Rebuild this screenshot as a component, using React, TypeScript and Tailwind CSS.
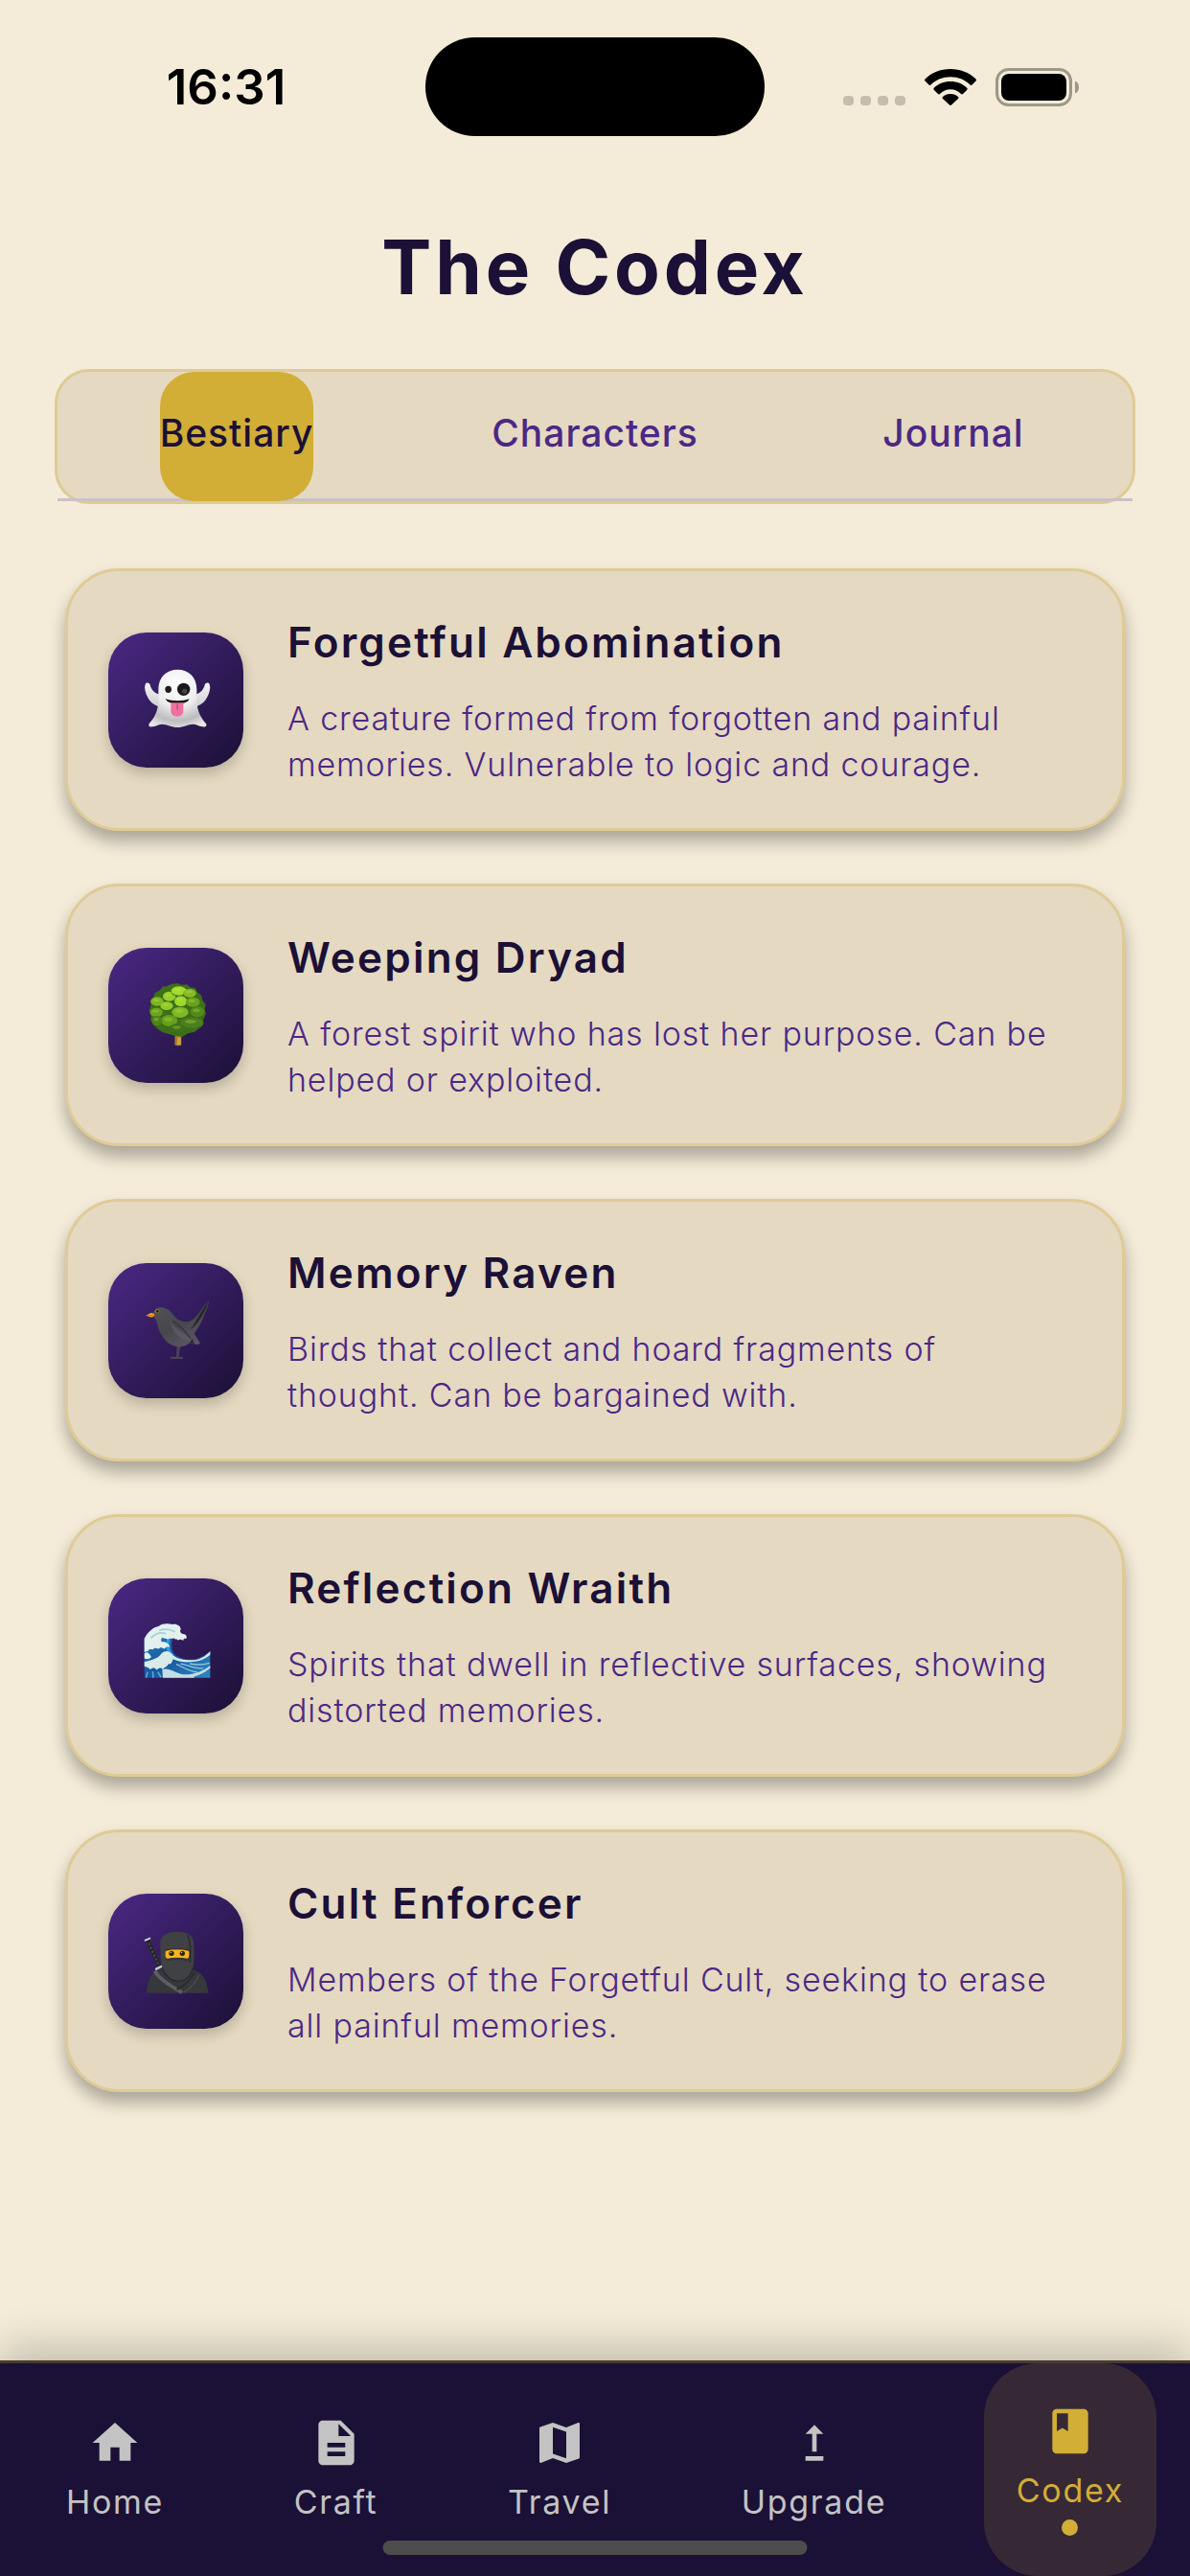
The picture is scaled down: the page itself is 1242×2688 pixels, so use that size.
import { useState } from 'react';
import type { ComponentType } from 'react';
import { MdBook, MdDescription, MdHome, MdMap, MdUpgrade } from 'react-icons/md';
import clsx from 'clsx';

function GhostArt() {
  return (
    <svg viewBox="145 149 210 210" className="size-[70px] overflow-visible" aria-hidden="true">
      <defs>
        <radialGradient id="ghostBody" cx="0.5" cy="0.25" r="0.8">
          <stop offset="0" stopColor="#ffffff" />
          <stop offset="0.5" stopColor="#ececec" />
          <stop offset="0.8" stopColor="#bdbdc0" />
          <stop offset="1" stopColor="#e6e6e6" />
        </radialGradient>
        <linearGradient id="ghostArm" x1="0" y1="0" x2="0" y2="1">
          <stop offset="0" stopColor="#f4f4f4" />
          <stop offset="1" stopColor="#cfcfd2" />
        </linearGradient>
      </defs>
      <path d="M153 206 C156 199 166 201 168 208 C172 224 182 234 200 238 V276 C174 274 154 248 151 216 Z" fill="url(#ghostArm)" />
      <path d="M354 206 C351 199 341 201 339 208 C335 224 325 234 307 238 V276 C333 274 353 248 356 216 Z" fill="url(#ghostArm)" />
      <path
        d="M194 222 C194 184 219 160 254 160 C289 160 314 184 314 222 V258 C315 290 328 314 343 329 C347 336 341 341 332 339 C320 337 312 331 302 331 C288 331 272 341 254 341 C236 341 220 331 206 331 C196 331 188 337 176 339 C166 341 161 336 165 329 C181 313 193 290 194 258 Z"
        fill="url(#ghostBody)"
      />
      <ellipse cx="225" cy="222" rx="10" ry="11" fill="#1c1c1c" />
      <circle cx="273" cy="222" r="20" fill="#191919" />
      <circle cx="276" cy="228" r="8" fill="#444444" />
      <path d="M216 252 C236 260 272 260 291 252 C286 264 270 267 254 267 C238 267 221 264 216 252 Z" fill="#101010" />
      <path d="M233 264 H272 V288 C272 301 264 307 253 307 C241 307 233 301 233 288 Z" fill="#f0709f" />
      <path d="M253 268 V285" stroke="#c84a7b" strokeWidth="4" strokeLinecap="round" />
    </svg>
  );
}

function TreeArt() {
  const clumps = [
    [190, 224, 20, 14, '#7fb524'],
    [228, 208, 20, 15, '#98cf2c'],
    [258, 191, 24, 14, '#a3da30'],
    [292, 198, 20, 13, '#86bb26'],
    [264, 223, 20, 16, '#9fd72c'],
    [302, 226, 22, 15, '#69a11f'],
    [220, 238, 20, 13, '#93c92a'],
    [188, 258, 20, 14, '#6ea321'],
    [262, 258, 26, 17, '#7fb826'],
    [316, 256, 22, 17, '#528a1b'],
    [228, 284, 26, 18, '#66a01e'],
    [190, 284, 16, 16, '#4e8519'],
    [298, 291, 36, 17, '#4b7f1c'],
    [254, 309, 26, 15, '#3f7117'],
  ] as const;

  return (
    <svg viewBox="145 161 210 210" className="size-[70px] overflow-visible" aria-hidden="true">
      <path d="M246 320 H266 V360 Q256 366 245 360 Z" fill="#a9792f" />
      <path d="M254 336 H264 V360 H252 Z" fill="#cf9f4c" />
      <path
        d="M254 167 L268 172 L283 171 L293 179 L309 183 L317 196 L329 205 L332 220 L342 234 L339 248 L343 264 L335 278 L335 296 L322 308 L306 320 L286 324 L268 335 L246 331 L226 326 L206 320 L190 309 L180 298 L170 284 L171 268 L165 252 L171 236 L168 222 L179 210 L184 196 L197 190 L207 178 L222 176 L236 169 Z"
        fill="#3d7018"
      />
      {clumps.map(([cx, cy, rx, ry, fill]) => (
        <g key={`${cx}-${cy}`}>
          <ellipse cx={cx} cy={cy + 3} rx={rx} ry={ry} fill="#3a6b15" />
          <ellipse cx={cx} cy={cy} rx={rx} ry={ry} fill={fill} />
          <ellipse cx={cx - 3} cy={cy - 4} rx={rx / 2} ry={ry / 3} fill="#c0ec50" opacity="0.3" />
        </g>
      ))}
    </svg>
  );
}

function RavenArt() {
  return (
    <svg viewBox="145 158 210 210" className="size-[70px] overflow-visible" aria-hidden="true">
      <defs>
        <linearGradient id="ravenBody" x1="0" y1="0" x2="0.6" y2="1">
          <stop offset="0" stopColor="#55535a" />
          <stop offset="0.6" stopColor="#48464d" />
          <stop offset="1" stopColor="#5a5662" />
        </linearGradient>
      </defs>
      <path d="M252 308 L250 346 H232 Q228 350 232 353 H270 Q274 350 268 346 H258 L263 308 Z" fill="#4b4258" />
      <path d="M350 172 C354 178 346 196 336 220 C326 246 314 262 306 274 L324 302 Q324 308 314 308 L292 303 C280 312 266 318 250 314 C224 308 206 288 196 262 C190 244 190 232 180 222 C174 206 184 192 200 192 C222 192 234 206 246 222 C256 234 272 238 288 236 C308 232 326 200 350 172 Z" fill="url(#ravenBody)" />
      <path d="M349 176 C338 190 322 216 312 234 C304 250 296 258 292 262 C310 252 326 228 338 204 C344 192 350 182 349 176 Z" fill="#26242b" />
      <path d="M228 236 C246 256 270 272 318 304 C292 302 262 290 244 270 Z" fill="#5f5d65" opacity="0.7" />
      <path d="M240 234 C262 250 282 268 294 290" stroke="#35333a" strokeWidth="4" fill="none" />
      <path d="M292 303 L300 290 L306 304 Z" fill="#26242b" />
      <path d="M155 217 L170 209 Q181 209 182 216 Q180 224 168 222 Z" fill="#f6a313" />
      <path d="M155 217 L182 216" stroke="#b86f0b" strokeWidth="2" />
      <circle cx="191" cy="204" r="6" fill="#a08a3a" />
      <circle cx="191" cy="204" r="4" fill="#141414" />
    </svg>
  );
}

function WaveArt() {
  return (
    <svg viewBox="145 154 210 210" className="size-[70px] overflow-visible" aria-hidden="true">
      <defs>
        <linearGradient id="waveSea" x1="0" y1="0" x2="1" y2="1">
          <stop offset="0" stopColor="#2f86c6" />
          <stop offset="0.5" stopColor="#1558a0" />
          <stop offset="1" stopColor="#2f86c0" />
        </linearGradient>
      </defs>
      <path d="M150 236 C170 208 196 194 226 198 L244 222 C232 246 232 270 246 288 C266 302 290 306 312 302 C332 296 346 286 356 277 V360 H150 Z" fill="url(#waveSea)" />
      <path d="M232 232 C224 254 228 276 244 290 L226 284 C214 268 216 250 222 234 Z" fill="#2a9be0" />
      <path
        d="M150 238 C160 216 178 202 196 198 C208 188 226 190 238 193 C250 190 264 198 264 208 C260 214 262 220 270 223 C280 222 286 232 280 239 C276 236 272 238 272 244 C266 240 260 238 256 243 C252 238 246 242 242 236 C236 240 228 234 224 240 C218 236 212 238 208 234 C202 236 200 244 206 248 C216 246 228 254 230 264 C222 260 216 264 212 270 C206 264 198 264 194 270 C188 266 180 266 176 272 C170 268 164 270 162 276 L150 280 Z"
        fill="#e3f1ee"
      />
      <path d="M170 236 C184 222 200 216 218 222 M196 212 C212 206 230 208 246 216" stroke="#a9cfd2" strokeWidth="5" fill="none" />
      <path d="M150 284 L158 280 L166 286 L172 296 L162 302 L150 300 Z" fill="#e3f1ee" />
      <path
        d="M150 310 C172 306 194 300 204 284 C216 272 230 276 240 290 C258 306 290 306 312 304 C332 300 346 288 356 277 V288 C338 304 318 308 300 310 C276 313 256 310 240 302 C236 314 232 320 226 316 C220 328 212 326 208 334 C200 326 194 330 188 336 C182 326 174 330 168 334 C162 326 156 326 150 324 Z"
        fill="#d9ebe9"
      />
      <path d="M206 334 C230 326 250 350 280 350 C310 350 338 336 356 322 V330 C336 346 320 352 306 356 V360 H208 Z" fill="#c3dfe3" />
      <path d="M250 318 C270 326 292 342 316 342 M264 316 C290 322 312 334 334 330 M292 316 C312 320 330 322 354 314" stroke="#8fc6dd" strokeWidth="4" fill="none" />
      <path d="M160 342 L156 360 M176 340 L178 360 M192 342 L202 358" stroke="#5fa7d2" strokeWidth="5" fill="none" />
    </svg>
  );
}

function NinjaArt() {
  return (
    <svg viewBox="145 151 210 210" className="size-[70px] overflow-visible" aria-hidden="true">
      <path d="M160 191 L198 274" stroke="#27262b" strokeWidth="14" strokeLinecap="round" />
      <path d="M164 202 L194 268" stroke="#59585e" strokeWidth="5" strokeDasharray="5 8" />
      <path d="M153 192 L167 186" stroke="#cfd0d6" strokeWidth="6" strokeLinecap="round" />
      <path d="M187 282 L207 272" stroke="#c7c8ce" strokeWidth="7" strokeLinecap="round" />
      <path d="M156 357 C160 320 168 296 190 286 L216 280 H296 L320 292 C340 304 346 328 351 357 Z" fill="#36383b" />
      <path d="M200 196 C204 174 226 165 252 165 C282 165 300 174 304 196 C306 222 307 248 303 276 C296 304 276 320 256 321 C234 318 214 304 206 280 C200 250 199 222 200 196 Z" fill="#3f4144" />
      <path d="M284 176 C294 190 296 220 292 262" stroke="#2b2d2f" strokeWidth="5" fill="none" />
      <rect x="216" y="219" width="74" height="32" rx="12" fill="#f5b51c" />
      <path d="M216 223 Q252 215 290 223" stroke="#2a2b2d" strokeWidth="4" fill="none" />
      <circle cx="235" cy="233" r="8" fill="#33230c" />
      <circle cx="269" cy="233" r="8" fill="#33230c" />
      <circle cx="233" cy="230" r="2" fill="#ffffff" />
      <circle cx="267" cy="230" r="2" fill="#ffffff" />
      <path d="M218 250 Q254 242 288 250 L284 256 Q254 250 222 256 Z" fill="#313336" />
      <path d="M206 280 C216 304 236 320 256 321 C278 319 296 304 303 276" stroke="#26282a" strokeWidth="4" fill="none" />
      <path d="M182 288 C200 316 232 334 268 356" stroke="#5d5f64" strokeWidth="11" fill="none" />
      <path d="M308 292 C294 318 276 334 252 346" stroke="#2a2c2f" strokeWidth="6" fill="none" />
      <path d="M322 300 C310 326 292 344 272 356" stroke="#4a4c50" strokeWidth="4" fill="none" />
    </svg>
  );
}

const tabs = ['Bestiary', 'Characters', 'Journal'];

const creatures: { name: string; description: string; art: ComponentType }[] = [
  {
    name: 'Forgetful Abomination',
    description: 'A creature formed from forgotten and painful memories. Vulnerable to logic and courage.',
    art: GhostArt,
  },
  {
    name: 'Weeping Dryad',
    description: 'A forest spirit who has lost her purpose. Can be helped or exploited.',
    art: TreeArt,
  },
  {
    name: 'Memory Raven',
    description: 'Birds that collect and hoard fragments of thought. Can be bargained with.',
    art: RavenArt,
  },
  {
    name: 'Reflection Wraith',
    description: 'Spirits that dwell in reflective surfaces, showing distorted memories.',
    art: WaveArt,
  },
  {
    name: 'Cult Enforcer',
    description: 'Members of the Forgetful Cult, seeking to erase all painful memories.',
    art: NinjaArt,
  },
];

const navItems = [
  { label: 'Home', icon: MdHome },
  { label: 'Craft', icon: MdDescription },
  { label: 'Travel', icon: MdMap },
  { label: 'Upgrade', icon: MdUpgrade },
  { label: 'Codex', icon: MdBook },
];

function StatusBar() {
  return (
    <div className="grid h-[181px] grid-cols-[1fr_354px_1fr] items-center text-black">
      <div className="pl-7 text-center text-[51px] leading-[60px] font-semibold">16:31</div>
      <div className="h-[103px] rounded-full bg-black" />
      <div className="flex items-center justify-end gap-5 pr-[115px]">
        <div className="flex gap-[7px] self-end pb-px">
          {[0, 1, 2, 3].map((i) => (
            <span key={i} className="h-[10px] w-[11px] rounded-[4px] bg-[#c5bdad]" />
          ))}
        </div>
        <svg viewBox="0 0 54 38" className="h-[38px] w-[54px]" aria-hidden="true">
          <path d="M27 0 C37.500 0 47 4 53.500 10.500 Q54.500 11.500 53.500 12.500 L49.500 16.500 Q48.500 17.300 47.500 16.500 C42 11 35 8.200 27 8.200 C19 8.200 12 11 6.500 16.500 Q5.500 17.300 4.500 16.500 L0.500 12.500 Q-0.500 11.500 0.500 10.500 C7 4 16.500 0 27 0 Z" />
          <path d="M27 13 C34 13 40 15.600 44.300 19.800 Q45.200 20.800 44.300 21.700 L40 26 Q39 26.800 38 26 C35 23 31.500 21.300 27 21.300 C22.500 21.300 19 23 16 26 Q15 26.800 14 26 L9.700 21.700 Q8.800 20.800 9.700 19.800 C14 15.600 20 13 27 13 Z" />
          <path d="M27 26 C30.500 26 33 27.200 35 29 Q36 30 35 31 L28 37.600 Q27 38.400 26 37.600 L19 31 Q18 30 19 29 C21 27.200 23.500 26 27 26 Z" />
        </svg>
        <svg viewBox="0 0 88 40" className="h-[40px] w-[88px]" aria-hidden="true">
          <rect x="1.500" y="1.500" width="77" height="37" rx="12" fill="none" stroke="#9d9789" strokeWidth="3" />
          <rect x="6" y="6" width="68" height="28" rx="8" />
          <path d="M83 13.500 Q87 15 87 20 Q87 25 83 26.500 Z" fill="#9d9789" />
        </svg>
      </div>
    </div>
  );
}

export default function App() {
  const [activeTab, setActiveTab] = useState('Bestiary');
  const [activeNav, setActiveNav] = useState('Codex');

  return (
    <div className="flex min-h-screen flex-col bg-[#f4ecd8] font-[Inter,sans-serif]">
      <StatusBar />

      <main className="flex-1 pt-[52px] pb-16">
        <h1 className="text-center text-[78px] leading-[92px] font-bold tracking-wider text-[#1b1036]">The Codex</h1>

        {/* Section tabs */}
        <div className="mx-[57px] mt-[60px] rounded-[36px] border-3 border-[#dfcb96] bg-[#e5d9c1]">
          <div role="tablist" className="relative grid h-[135px] grid-cols-3">
            <div className="absolute inset-x-0 bottom-0 h-[3px] bg-[#cac1c7]" />
            {tabs.map((tab) => (
              <button
                key={tab}
                type="button"
                role="tab"
                aria-selected={activeTab === tab}
                onClick={() => setActiveTab(tab)}
                className={clsx(
                  'relative justify-self-center rounded-[36px] pb-[6px] text-[39px] font-medium tracking-wide',
                  activeTab === tab ? 'bg-[#d2ae36] text-[#1b1036]' : 'text-[#4b2885]',
                )}
              >
                {tab}
              </button>
            ))}
          </div>
        </div>

        {/* Creature cards */}
        <ul className="mx-[68px] mt-[67px] flex flex-col gap-[55px]">
          {creatures.map((creature) => (
            <li
              key={creature.name}
              className="flex items-center gap-[46px] rounded-[56px] border-3 border-[#dfcb96] bg-[#e5d9c1] p-[42px] shadow-[0_11px_17px_rgba(0,0,0,0.3)]"
            >
              <div className="flex size-[141px] shrink-0 items-center justify-center rounded-[40px] bg-linear-to-br from-[#4b2885] to-[#1b1036] shadow-[0_6px_14px_rgba(0,0,0,0.2)]">
                <creature.art />
              </div>
              <div className="min-w-0 flex-1">
                <h2 className="text-[44px] leading-[64px] font-semibold tracking-wider text-[#1b1036]">{creature.name}</h2>
                <p className="mt-6 pr-3 text-[34px] leading-[48px] font-light tracking-wide text-[#4b2885]">{creature.description}</p>
              </div>
            </li>
          ))}
        </ul>
      </main>

      <nav className="sticky bottom-0 border-t-3 border-[#4a3b33] bg-[#1b1036] px-[35px] shadow-[0_-14px_42px_rgba(0,0,0,0.2)]">
        <div className="flex h-[222px] justify-between">
          {navItems.map((item) => {
            const active = activeNav === item.label;
            return (
              <button
                key={item.label}
                type="button"
                onClick={() => setActiveNav(item.label)}
                className={clsx(
                  'flex flex-col items-center justify-center rounded-[56px] px-[34px]',
                  active ? 'bg-[#372836] text-[#d2ae36]' : 'text-[#c3c3c3]',
                )}
              >
                <item.icon size={56} />
                <span className="mt-3 text-[34px] leading-[44px] tracking-wider">{item.label}</span>
                {active && <span className="mt-2 size-[17px] rounded-full bg-[#d2ae36]" />}
              </button>
            );
          })}
        </div>
        <div className="absolute bottom-[22px] left-1/2 h-[15px] w-[443px] -translate-x-1/2 rounded-full bg-[#4d4d4d]" />
      </nav>
    </div>
  );
}
